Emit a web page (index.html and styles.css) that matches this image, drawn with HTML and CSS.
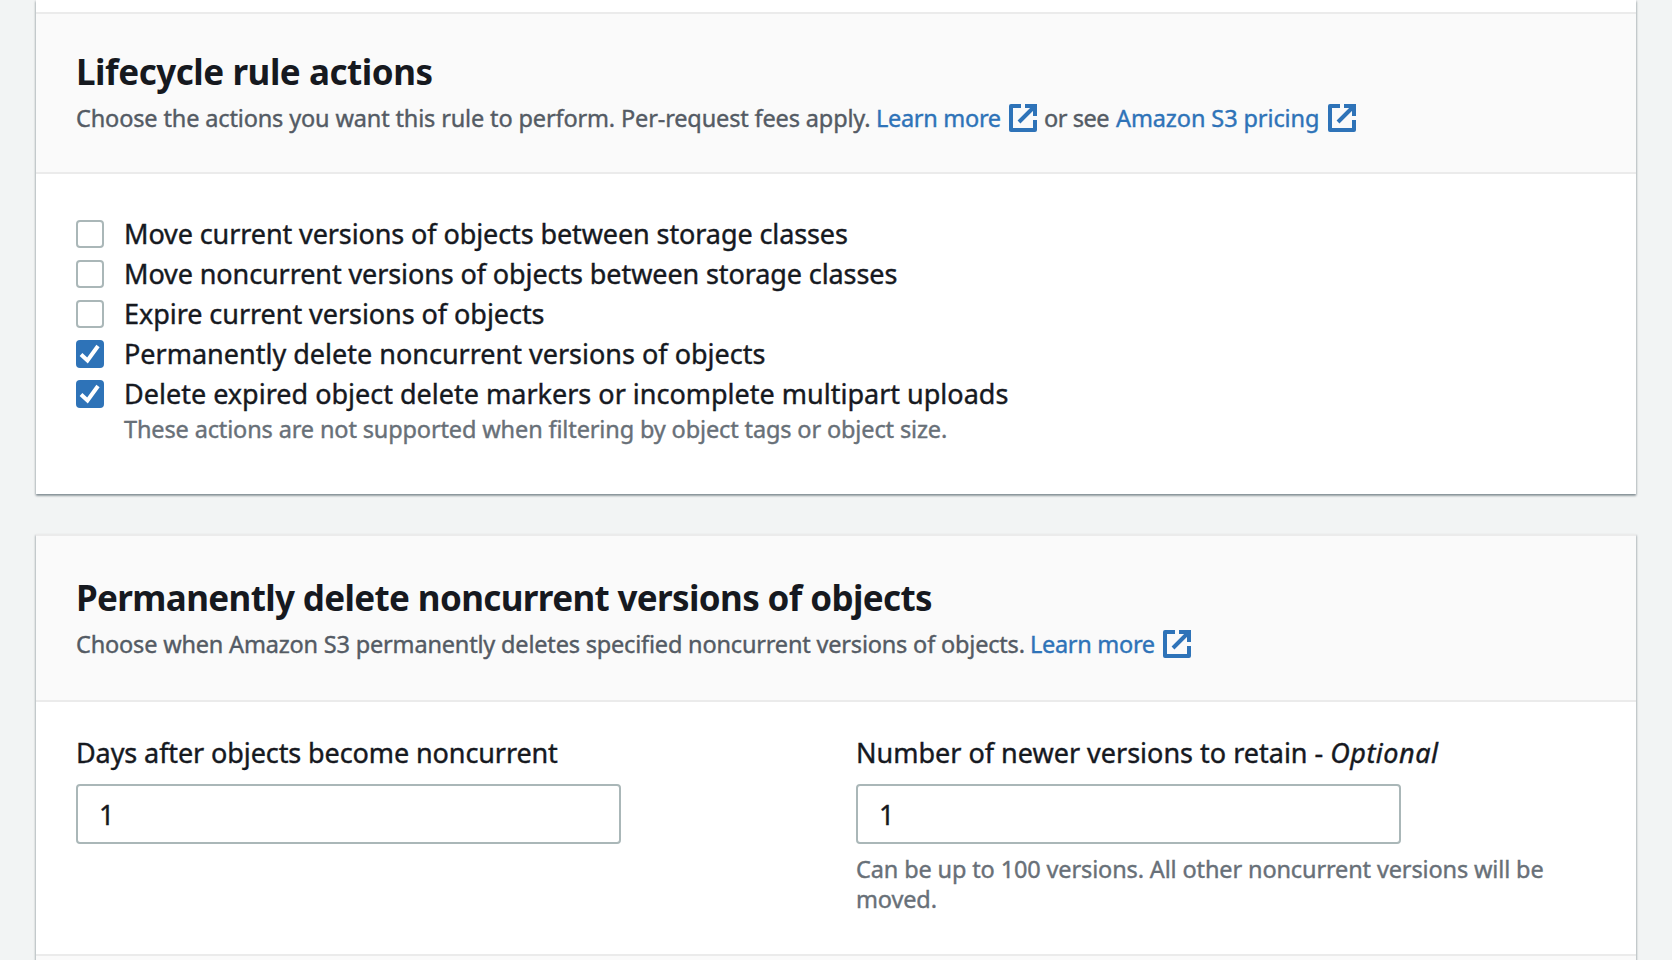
FILE: index.html
```
<!DOCTYPE html>
<html lang="en">
<head>
<meta charset="utf-8">
<title>Create lifecycle rule</title>
<link rel="stylesheet" href="styles.css">
</head>
<body>
<svg class="sprite" aria-hidden="true">
  <symbol id="external" viewBox="0 0 28 28">
    <path d="M12 2H2V26H26V16" fill="none" stroke="currentColor" stroke-width="4" stroke-linejoin="round"/>
    <path d="M16 2H26V12M25 3L10 18" fill="none" stroke="currentColor" stroke-width="4"/>
  </symbol>
  <symbol id="check" viewBox="0 0 28 28">
    <path d="M5 14.5L11.5 20.5L22 6" fill="none" stroke="currentColor" stroke-width="4"/>
  </symbol>
</svg>
<main class="page">
  <section class="card card-actions">
    <header class="card-header">
      <h2 class="title title-actions">Lifecycle rule actions</h2>
      <p class="description"><span class="intro">Choose the actions you want this rule to perform. Per-request fees apply.</span><a class="link link-learn">Learn more</a><svg class="external"><use href="#external"/></svg><span class="or-see">or see</span><a class="link link-pricing">Amazon S3 pricing</a><svg class="external"><use href="#external"/></svg></p>
    </header>
    <div class="card-body actions">
      <label class="option"><span class="box"></span><span class="option-text row-move">Move current versions of objects between storage classes</span></label>
      <label class="option"><span class="box"></span><span class="option-text row-move">Move noncurrent versions of objects between storage classes</span></label>
      <label class="option"><span class="box"></span><span class="option-text row-expire">Expire current versions of objects</span></label>
      <label class="option"><span class="box checked"><svg><use href="#check"/></svg></span><span class="option-text row-delete">Permanently delete noncurrent versions of objects</span></label>
      <label class="option"><span class="box checked"><svg><use href="#check"/></svg></span><span class="option-text row-delete">Delete expired object delete markers or incomplete multipart uploads</span></label>
      <p class="hint option-hint">These actions are not supported when filtering by object tags or object size.</p>
    </div>
  </section>
  <section class="card card-delete">
    <header class="card-header">
      <h2 class="title title-delete">Permanently delete noncurrent versions of objects</h2>
      <p class="description"><span class="intro intro-delete">Choose when Amazon S3 permanently deletes specified noncurrent versions of objects.</span><a class="link link-learn">Learn more</a><svg class="external"><use href="#external"/></svg></p>
    </header>
    <div class="card-body fields">
      <div class="field">
        <label class="label label-days" for="days">Days after objects become noncurrent</label>
        <input class="input" id="days" type="text" value="1">
      </div>
      <div class="field">
        <label class="label" for="versions">Number of newer versions to retain - <em>Optional</em></label>
        <input class="input" id="versions" type="text" value="1">
        <p class="hint">Can be up to 100 versions. All other noncurrent versions will be moved.</p>
      </div>
    </div>
    <footer class="card-footer"></footer>
  </section>
</main>
</body>
</html>
```
FILE: styles.css
```
* { box-sizing: border-box; }
body {
  margin: 0;
  height: 960px;
  overflow: hidden;
  background: #f2f4f4;
  color: #16191f;
  font-family: "Noto Sans", sans-serif;
  font-size: 27px;
  -webkit-text-stroke: 0.4px currentColor;
}
h2, p { margin: 0; }
.sprite { display: none; }
.page {
  display: flex;
  flex-direction: column;
  gap: 40px;
  padding: 0 36px;
}
.card {
  background: #fff;
  box-shadow: 0 2px 2px 0 rgba(0, 28, 36, 0.3), 1px 1px 2px 0 rgba(0, 28, 36, 0.15), -1px 1px 2px 0 rgba(0, 28, 36, 0.15);
}
.card-actions { padding-top: 12px; }
.card-header {
  padding: 36px 40px 38px;
  background: #fafafa;
  border-top: 2px solid #ebebeb;
  border-bottom: 2px solid #ebebeb;
}
.card-delete .card-header { padding: 40px 40px; }
.title {
  margin-bottom: 8px;
  font-size: 35px;
  font-weight: 700;
  line-height: 44px;
  white-space: nowrap;
  -webkit-text-stroke: 0;
}
.title-actions { letter-spacing: -0.46px; }
.title-delete { letter-spacing: -0.64px; }
.description {
  display: flex;
  height: 32px;
  color: #545b64;
  font-size: 23.5px;
  line-height: 32px;
  white-space: nowrap;
}
.intro { width: 800px; letter-spacing: -0.145px; }
.intro-delete { width: 954px; letter-spacing: -0.185px; }
.link { color: #2e73b8; }
.link-learn { width: 133px; letter-spacing: -0.3px; }
.external {
  width: 28px;
  height: 28px;
  margin-top: 2px;
  color: #2e73b8;
}
.or-see { width: 79px; padding-left: 7px; letter-spacing: -0.45px; }
.link-pricing { width: 212px; letter-spacing: -0.1px; }
.card-body { padding: 40px; }
.actions { padding-bottom: 50px; }
.option {
  display: flex;
  align-items: flex-start;
  gap: 20px;
  height: 40px;
  line-height: 40px;
}
.box {
  width: 28px;
  height: 28px;
  margin-top: 6px;
  border: 2px solid #aab7b8;
  border-radius: 4px;
}
.checked { border: 0; background: #2e73b8; color: #fff; }
.checked svg { display: block; width: 28px; height: 28px; }
.option-text { white-space: nowrap; }
.row-move { letter-spacing: -0.1px; }
.row-expire { letter-spacing: -0.05px; }
.row-delete { letter-spacing: 0; }
.hint {
  color: #687078;
  font-size: 23.5px;
  line-height: 30px;
  letter-spacing: -0.135px;
}
.option-hint { padding-left: 48px; }
.fields {
  display: grid;
  grid-template-columns: 740px 740px;
  gap: 40px;
  padding-top: 31px;
}
.label {
  display: block;
  margin-bottom: 11px;
  line-height: 40px;
  white-space: nowrap;
}
.label-days { letter-spacing: -0.1px; }
.label em { letter-spacing: 0.5px; }
.input {
  display: block;
  width: 545px;
  height: 60px;
  padding: 0 20px 0 21px;
  border: 2px solid #aab7b8;
  border-radius: 4px;
  background: #fff;
  color: #16191f;
  font: inherit;
}
.field .hint { margin-top: 10px; }
.card-footer {
  height: 40px;
  background: #fafafa;
  border-top: 2px solid #ebebeb;
}
```
